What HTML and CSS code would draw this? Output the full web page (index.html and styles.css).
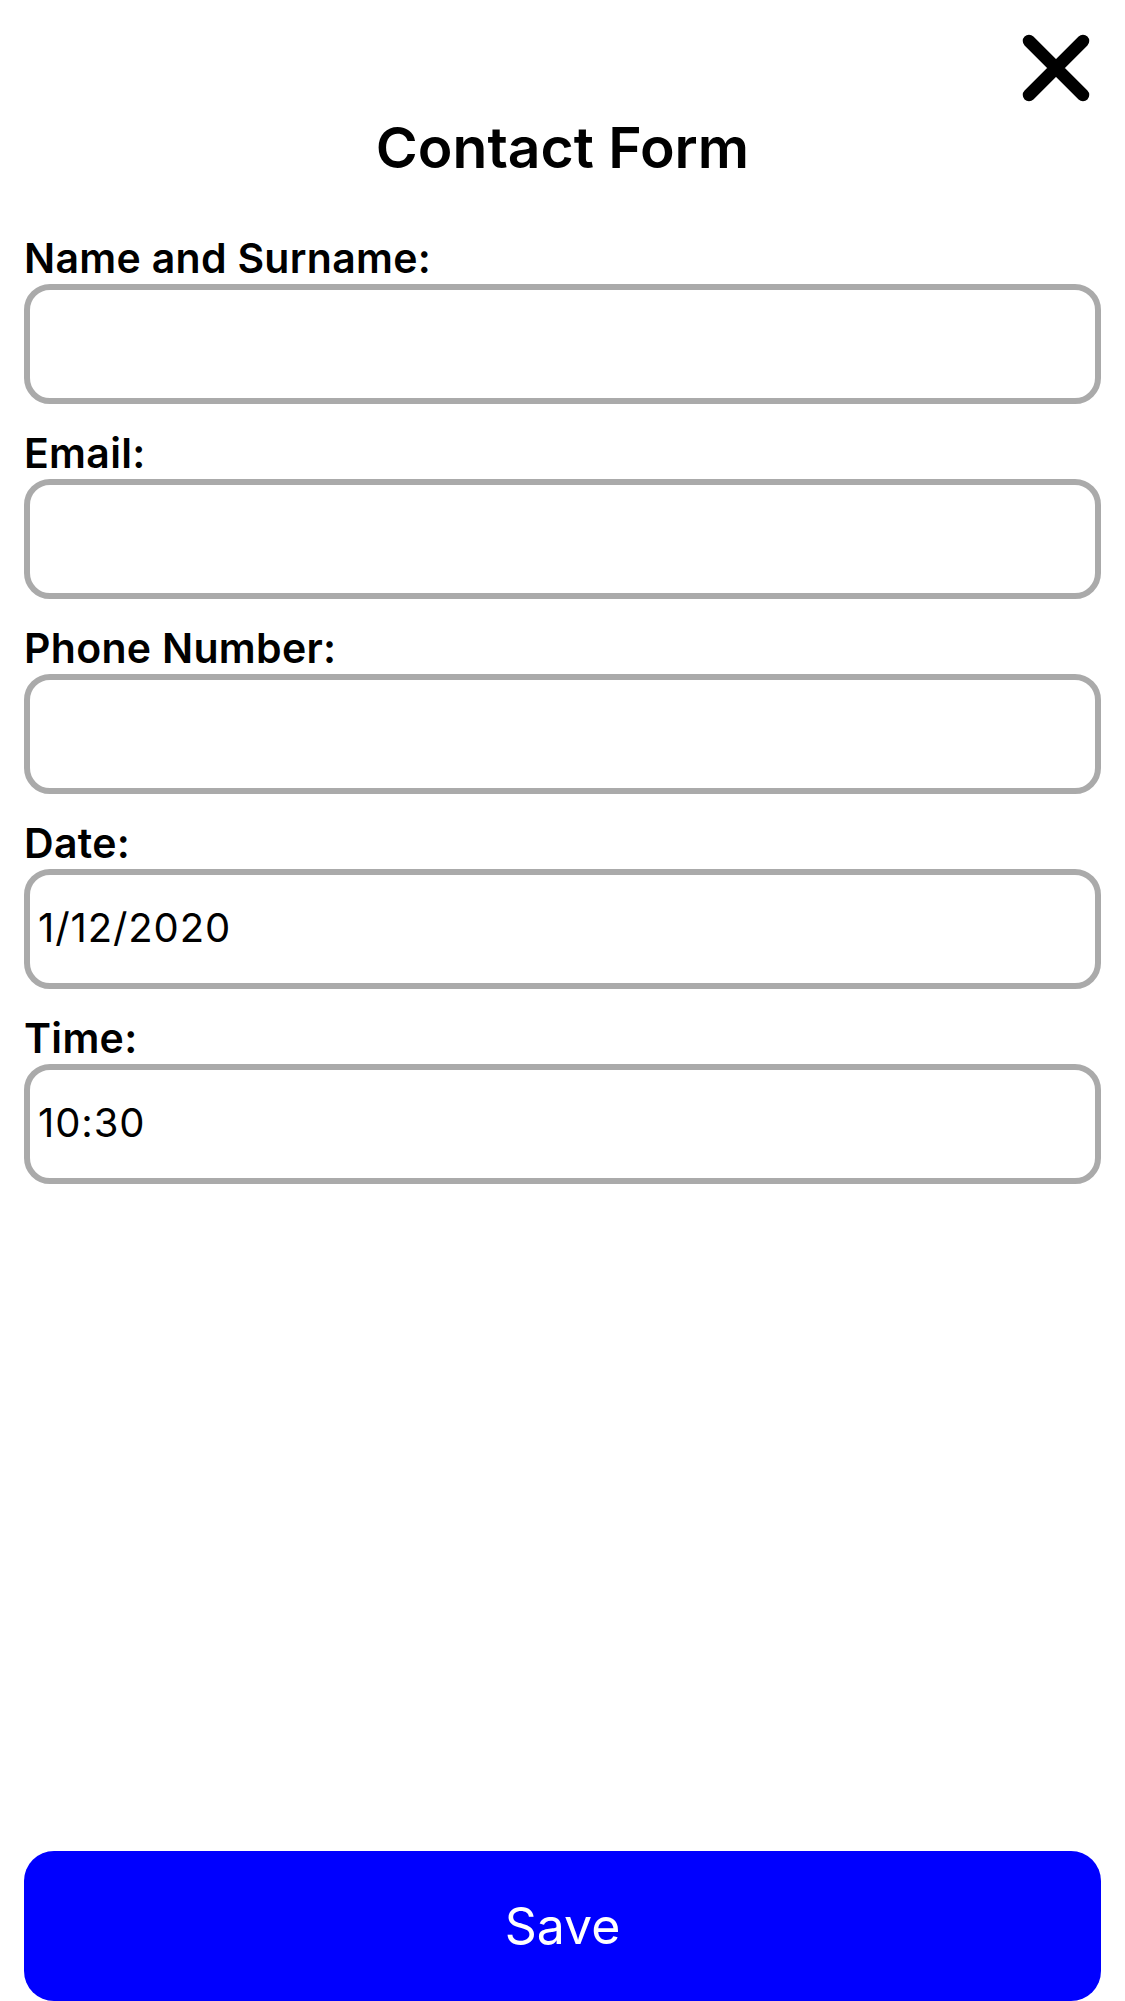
FILE: index.html
```html
<!DOCTYPE html>
<html lang="en">
<head>
<meta charset="utf-8">
<title>Contact Form</title>
<link rel="stylesheet" href="styles.css">
</head>
<body>
<div class="screen">
  <div class="close-row">
    <button class="close-btn" aria-label="Close">
      <svg width="68" height="68" viewBox="0 0 68 68" aria-hidden="true">
        <path d="M7 7 L61 61 M61 7 L7 61" stroke="#000" stroke-width="12.5" stroke-linecap="round" fill="none"/>
      </svg>
    </button>
  </div>
  <h1 class="title">Contact Form</h1>
  <form class="form">
    <div class="field">
      <label class="label">Name and Surname:</label>
      <div class="input"></div>
    </div>
    <div class="field">
      <label class="label">Email:</label>
      <div class="input"></div>
    </div>
    <div class="field">
      <label class="label">Phone Number:</label>
      <div class="input"></div>
    </div>
    <div class="field">
      <label class="label">Date:</label>
      <div class="input"><span class="value">1/12/2020</span></div>
    </div>
    <div class="field">
      <label class="label">Time:</label>
      <div class="input"><span class="value">10:30</span></div>
    </div>
  </form>
  <button class="save">Save</button>
</div>
</body>
</html>
```

FILE: styles.css
```css
html, body {
  margin: 0;
  padding: 0;
  background: #ffffff;
}

body {
  font-family: Inter, "Noto Sans", "Liberation Sans", sans-serif;
  color: #000;
}

.screen {
  box-sizing: border-box;
  height: 2001px;
  padding: 0 24px;
  display: flex;
  flex-direction: column;
}

.close-row {
  display: flex;
  justify-content: flex-end;
  padding-top: 34px;
  padding-right: 11px;
}

.close-btn {
  width: 68px;
  height: 68px;
  padding: 0;
  border: 0;
  background: none;
  display: block;
}

.close-btn svg {
  display: block;
}

.title {
  margin: 18px 0 0;
  font-size: 57px;
  line-height: 56px;
  font-weight: 600;
  text-align: center;
}

.form {
  margin-top: 62px;
  display: flex;
  flex-direction: column;
  gap: 29px;
}

.field {
  display: flex;
  flex-direction: column;
}

.label {
  font-size: 41px;
  line-height: 40px;
  font-weight: 600;
  letter-spacing: 0.3px;
  margin-bottom: 6px;
}

.input {
  box-sizing: border-box;
  height: 120px;
  border: 6px solid #aaaaaa;
  border-radius: 26px;
  display: flex;
  align-items: center;
  padding: 0 8px 3px;
}

.value {
  font-size: 40px;
  font-weight: 400;
  letter-spacing: 0.9px;
}

.save {
  margin-top: auto;
  height: 150px;
  border: 0;
  border-radius: 30px;
  background: #0000ff;
  color: #ffffff;
  font-family: Inter, "Noto Sans", "Liberation Sans", sans-serif;
  font-size: 50px;
  font-weight: 400;
  padding: 0;
}
```
